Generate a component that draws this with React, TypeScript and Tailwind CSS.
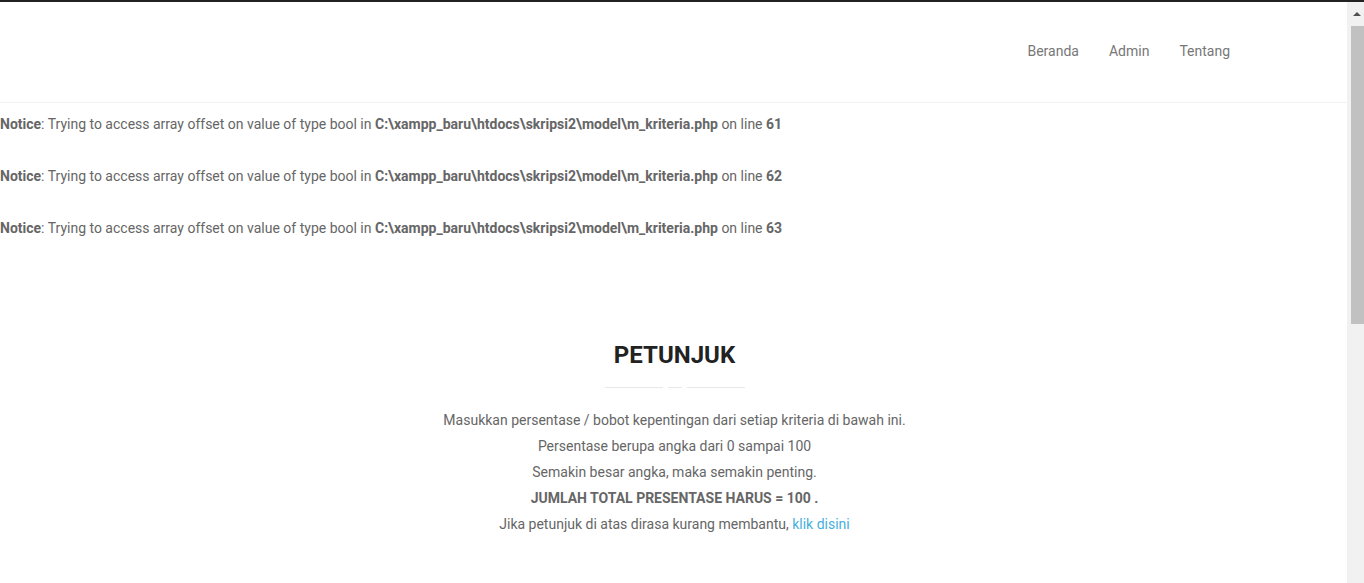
import React from 'react';

const notices = [61, 62, 63];

const Notice = ({ line }: { line: number }) => (
    <div className="leading-[26px]">
        <b className="font-bold">Notice</b>: Trying to access array offset on value of type bool in{' '}
        <b className="font-bold">C:\xampp_baru\htdocs\skripsi2\model\m_kriteria.php</b> on line{' '}
        <b className="font-bold">{line}</b>
    </div>
);

const Scrollbar = () => (
    <div className="w-[17px] shrink-0 bg-[#f1f1f1] flex flex-col items-end">
        <div className="h-[24px] w-full flex items-center justify-center pl-[2px]">
            <div className="w-0 h-0 border-l-[4px] border-r-[4px] border-b-[4px] border-l-transparent border-r-transparent border-b-[#505050]" />
        </div>
        <div className="h-[298px] w-[13px] bg-[#c1c1c1]" />
    </div>
);

export default function App() {
    return (
        <div className="h-[583px] overflow-hidden bg-white text-[14px] text-[#666]" style={{ fontFamily: 'Roboto, "Liberation Sans", sans-serif' }}>
            <div className="h-[2px] bg-[#222]" />
            <div className="flex h-[581px]">
                <div className="flex-1 min-w-0">
                    <header className="h-[101px] border-b border-[#f2f2f2] flex items-center justify-end pr-[102px]">
                        <nav className="flex text-[#777] -mt-[2px]">
                            {['Beranda', 'Admin', 'Tentang'].map((item) => (
                                <a key={item} href="#" className="px-[15px]">{item}</a>
                            ))}
                        </nav>
                    </header>

                    <div className="pt-[8px] space-y-[26px]">
                        {notices.map((n) => <Notice key={n} line={n} />)}
                    </div>

                    <section className="mt-[99px] pl-[2px] text-center">
                        <h2 className="text-[24px] leading-[30px] font-bold text-[#222]">PETUNJUK</h2>
                        <div className="flex justify-center gap-[5px] mt-[17px]">
                            <span className="h-px w-[58px] bg-[#e8e8e8]" />
                            <span className="h-px w-[14px] bg-[#e8e8e8]" />
                            <span className="h-px w-[58px] bg-[#e8e8e8]" />
                        </div>
                        <div className="mt-[19px] leading-[26px]">
                            <p>Masukkan persentase / bobot kepentingan dari setiap kriteria di bawah ini.</p>
                            <p>Persentase berupa angka dari 0 sampai 100</p>
                            <p>Semakin besar angka, maka semakin penting.</p>
                            <p className="font-bold">JUMLAH TOTAL PRESENTASE HARUS = 100 .</p>
                            <p>
                                Jika petunjuk di atas dirasa kurang membantu,{' '}
                                <a href="#" className="text-[#45b0de]">klik disini</a>
                            </p>
                        </div>
                    </section>
                </div>
                <Scrollbar />
            </div>
        </div>
    );
}
